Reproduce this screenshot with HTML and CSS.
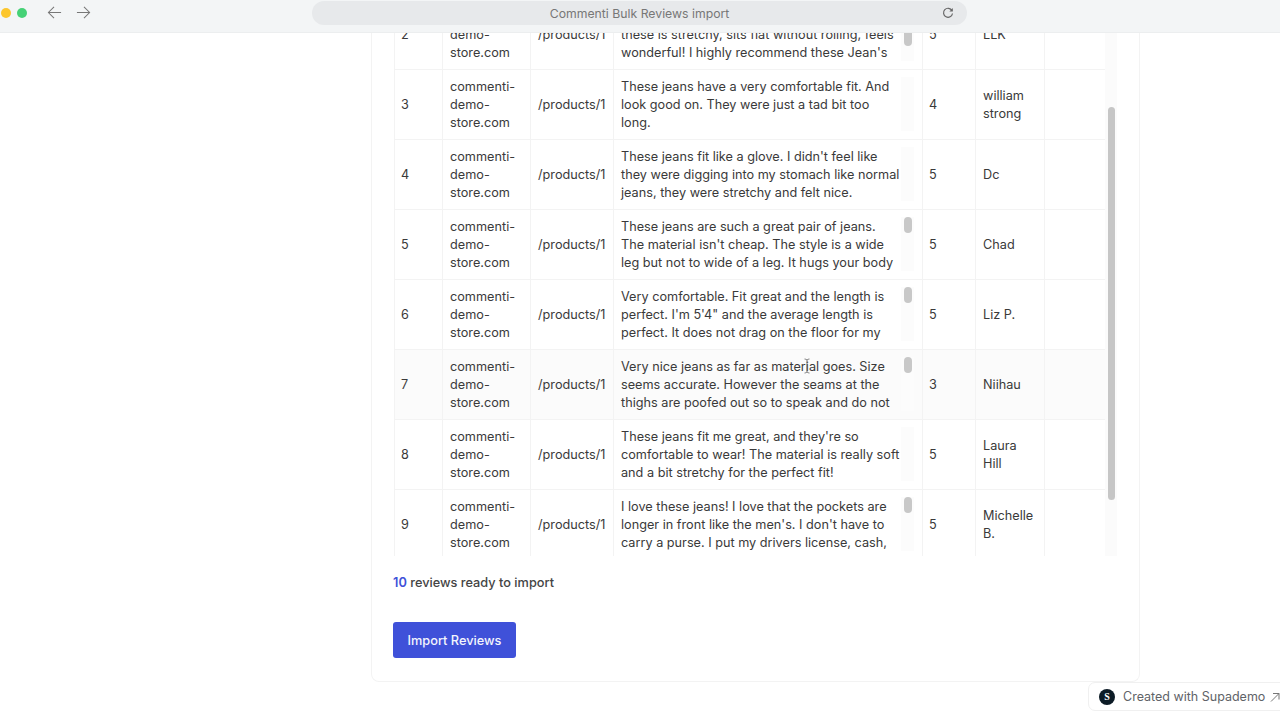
FILE: index.html
```html
<!DOCTYPE html>
<html lang="en">
<head>
<meta charset="utf-8">
<title>Commenti Bulk Reviews import</title>
<link rel="stylesheet" href="styles.css">
</head>
<body>
<header class="browser-bar">
  <div class="lights"><span class="light yellow"></span><span class="light green"></span></div>
  <nav class="nav-arrows">
    <svg class="arrow" viewBox="0 0 16 16"><path d="M15 8H1.500M7.500 2L1.500 8l6 6"/></svg>
    <svg class="arrow" viewBox="0 0 16 16"><path d="M1 8h13.500M8.500 2l6 6-6 6"/></svg>
  </nav>
  <div class="url-bar">
    <span class="url-text">Commenti Bulk Reviews import</span>
    <svg class="reload" viewBox="0 0 12 12"><path d="M10 3.600A4.500 4.500 0 1 0 10.500 6.500"/><path class="solid" d="M10.800 1v3.400H7.400z"/></svg>
  </div>
</header>
<main class="page">
  <section class="card">
    <div class="table-wrap">
      <div class="table-clip">
        <table class="reviews">
          <colgroup><col class="c1"><col class="c2"><col class="c3"><col class="c4"><col class="c5"><col class="c6"><col class="c7"></colgroup>
          <tbody>
            <tr><td class="num">2</td><td>commenti-demo-store.com</td><td>/products/1</td><td><div class="review end"><p>these is stretchy, sits flat without rolling, feels wonderful! I highly recommend these Jean's</p><div class="track"><span class="thumb low"></span></div></div></td><td class="num">5</td><td>LLK</td><td></td></tr>
            <tr><td class="num">3</td><td>commenti-demo-store.com</td><td>/products/1</td><td><div class="review"><p>These jeans have a very comfortable fit. And look good on. They were just a tad bit too long.</p><div class="track"></div></div></td><td class="num">4</td><td>william strong</td><td></td></tr>
            <tr><td class="num">4</td><td>commenti-demo-store.com</td><td>/products/1</td><td><div class="review"><p>These jeans fit like a glove. I didn't feel like they were digging into my stomach like normal jeans, they were stretchy and felt nice.</p><div class="track"></div></div></td><td class="num">5</td><td>Dc</td><td></td></tr>
            <tr><td class="num">5</td><td>commenti-demo-store.com</td><td>/products/1</td><td><div class="review"><p>These jeans are such a great pair of jeans. The material isn't cheap. The style is a wide leg but not to wide of a leg. It hugs your body</p><div class="track"><span class="thumb"></span></div></div></td><td class="num">5</td><td>Chad</td><td></td></tr>
            <tr><td class="num">6</td><td>commenti-demo-store.com</td><td>/products/1</td><td><div class="review"><p>Very comfortable. Fit great and the length is perfect. I'm 5'4" and the average length is perfect. It does not drag on the floor for my</p><div class="track"><span class="thumb"></span></div></div></td><td class="num">5</td><td>Liz P.</td><td></td></tr>
            <tr class="hovered"><td class="num">7</td><td>commenti-demo-store.com</td><td>/products/1</td><td><div class="review"><p>Very nice jeans as far as material goes. Size seems accurate. However the seams at the thighs are poofed out so to speak and do not</p><div class="track"><span class="thumb"></span></div></div></td><td class="num">3</td><td>Niihau</td><td></td></tr>
            <tr><td class="num">8</td><td>commenti-demo-store.com</td><td>/products/1</td><td><div class="review"><p>These jeans fit me great, and they're so comfortable to wear! The material is really soft and a bit stretchy for the perfect fit!</p><div class="track"></div></div></td><td class="num">5</td><td>Laura Hill</td><td></td></tr>
            <tr><td class="num">9</td><td>commenti-demo-store.com</td><td>/products/1</td><td><div class="review"><p>I love these jeans! I love that the pockets are longer in front like the men's. I don't have to carry a purse. I put my drivers license, cash,</p><div class="track"><span class="thumb"></span></div></div></td><td class="num">5</td><td>Michelle B.</td><td></td></tr>
          </tbody>
        </table>
      </div>
      <div class="outer-track"><span class="outer-thumb"></span></div>
    </div>
    <p class="summary"><span class="count">10</span> reviews ready to import</p>
    <button class="import-btn" type="button">Import Reviews</button>
  </section>
</main>
<svg class="cursor" viewBox="0 0 8 16"><path d="M1.500 1c1 0 2 .4 2.500 1 .5-.6 1.500-1 2.500-1M4 2v12M1.500 15c1 0 2-.4 2.500-1 .5.6 1.500 1 2.500 1"/></svg>
<a class="badge" href="#"><span class="badge-logo">S</span><span>Created with Supademo</span><svg class="badge-arrow" viewBox="0 0 10 10"><path d="M1 9.500L9 1.500M3 1.500h6v6"/></svg></a>
</body>
</html>
```

FILE: styles.css
```css
* { box-sizing: border-box; }
html, body { margin: 0; height: 720px; overflow: hidden; }
body { background: #fff; font-family: Inter, "Liberation Sans", sans-serif; color: #3a3a3a; display: flex; flex-direction: column; }

.browser-bar { height: 33px; flex: none; background: #f3f5f6; border-bottom: 1px solid #eceeef; display: flex; align-items: flex-start; position: relative; z-index: 2; }
.lights { display: flex; gap: 6px; padding: 8px 0 0 1px; width: 47px; }
.light { width: 10px; height: 10px; border-radius: 50%; }
.yellow { background: #fcc62d; }
.green { background: #45d176; }
.nav-arrows { display: flex; gap: 14px; padding-top: 5px; width: 265px; }
.arrow { width: 15px; height: 15px; fill: none; stroke: #777; stroke-width: 1.1; }
.url-bar { width: 655px; height: 24px; margin-top: 1px; background: #e7e9eb; border-radius: 12px; display: flex; align-items: center; justify-content: center; position: relative; }
.url-text { font-size: 12.250px; color: #777; }
.reload { position: absolute; right: 13px; top: 6px; width: 12px; height: 12px; fill: none; stroke: #666; stroke-width: 1.2; }
.reload .solid { fill: #666; stroke: none; }

.page { flex: 1; padding-left: 371px; }
.card { width: 769px; height: 649px; border: 1px solid #f3f3f3; border-top: 0; border-radius: 0 0 8px 8px; padding-left: 21px; }
.table-wrap { display: flex; width: 724px; height: 523px; overflow: hidden; padding-left: 1px; }
.table-clip { width: 711px; height: 523px; overflow: hidden; flex: none; }
.reviews { border-collapse: collapse; table-layout: fixed; width: 711px; margin-top: -34px; font-size: 12.700px; line-height: 18px; }
.c1 { width: 48px; } .c2 { width: 88px; } .c3 { width: 83px; } .c4 { width: 309px; } .c5 { width: 53px; } .c6 { width: 69px; } .c7 { width: 61px; }
.reviews tr { height: 70px; }
.reviews td { border: 1px solid #f3f3f3; padding: 8px 7px 7px; vertical-align: middle; color: #3a3a3a; }
.reviews .num { padding-left: 6px; }
.hovered td { background: #fbfbfb; }
.review { display: flex; height: 54px; }
.review p { margin: 0; width: 280px; flex: none; }
.end p { align-self: flex-end; }
.track { width: 13px; height: 54px; margin-top: -1px; flex: none; background: #fcfcfc; padding: 0 3px; }
.thumb { display: block; width: 8px; height: 16px; border-radius: 4px; background: #c8c8c8; }
.thumb.low { margin-top: 23px; }

.outer-track { width: 12px; height: 523px; flex: none; background: #fbfbfb; padding: 74px 2px 0 3px; }
.outer-thumb { display: block; width: 7px; height: 393px; border-radius: 4px; background: #c6c6c6; }

.summary { margin: 19px 0 0; font-size: 12.750px; line-height: 16px; font-weight: 500; color: #444; }
.count { color: #3f51d9; font-weight: 600; }
.import-btn { display: block; margin-top: 31px; width: 123px; height: 36px; border: 0; border-radius: 3px; background: #3f51d9; color: #f4f5fd; font: 500 12.750px Inter, "Liberation Sans", sans-serif; }

.cursor { position: absolute; left: 803px; top: 358px; width: 8px; height: 16px; fill: none; stroke: #666; stroke-width: .8; z-index: 3; }
.badge { position: absolute; left: 1088px; top: 682px; width: 200px; height: 29px; padding-left: 10px; display: flex; align-items: center; gap: 8px; background: #fff; border: 1px solid #f0f0f0; border-radius: 7px; font-size: 12.500px; color: #5f6368; text-decoration: none; }
.badge-logo { width: 16px; height: 16px; border-radius: 50%; background: #0c1b26; color: #fff; font: 700 10px/16px "Liberation Serif", serif; text-align: center; flex: none; }
.badge-arrow { width: 10px; height: 10px; margin-left: -3px; fill: none; stroke: #777; stroke-width: 1; flex: none; }
```
